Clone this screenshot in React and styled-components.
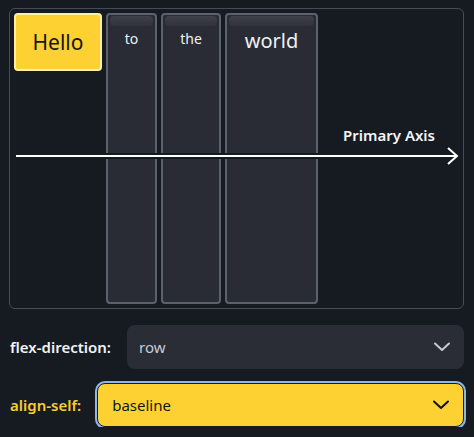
import React from "react";
import styled, { createGlobalStyle } from "styled-components";

const GlobalStyle = createGlobalStyle`
    body {
        margin: 0;
        background: #161b22;
        font-family: "Noto Sans", Lato, sans-serif;
    }
`;

const items = [
    { label: "Hello", width: 88, size: 21, active: true },
    { label: "to", width: 51, size: 14 },
    { label: "the", width: 60, size: 14 },
    { label: "world", width: 93, size: 20 },
];

function Chevron({ color }) {
    return (
        <svg width="18" height="10" viewBox="0 0 18 10">
            <polyline points="2,1.5 9,8 16,1.5" fill="none" stroke={color} strokeWidth="2" strokeLinecap="round" strokeLinejoin="round" />
        </svg>
    );
}

function Select({ value, highlight }) {
    return (
        <SelectBox highlight={highlight}>
            <span>{value}</span>
            <Chevron color={highlight ? "#111" : "#c6cad1"} />
        </SelectBox>
    );
}

export default function App() {
    return (
        <Page>
            <GlobalStyle />
            <Frame>
                {items.map((it) => (
                    <Item key={it.label} width={it.width} size={it.size} active={it.active}>
                        {it.label}
                    </Item>
                ))}
                <Axis>
                    <AxisLabel>Primary Axis</AxisLabel>
                    <svg width="446" height="20" viewBox="0 0 446 20">
                        <rect x="0" y="7" width="440" height="6" fill="#161b22" />
                        <line x1="0" y1="10" x2="441" y2="10" stroke="#fff" strokeWidth="2" />
                        <polyline points="432,2 441,10 432,18" fill="none" stroke="#fff" strokeWidth="2" />
                    </svg>
                </Axis>
            </Frame>
            <Controls>
                <Row>
                    <Label>flex-direction:</Label>
                    <Select value="row" />
                </Row>
                <Row>
                    <Label highlight>align-self:</Label>
                    <Select value="baseline" highlight />
                </Row>
            </Controls>
        </Page>
    );
}

const Page = styled.div`
    padding: 8px 10px 0 9px;
`;

const Frame = styled.div`
    position: relative;
    height: 301px;
    box-sizing: border-box;
    border: 1px solid #464c56;
    border-radius: 6px;
    padding: 4px;
    display: flex;
    gap: 4px;
`;

const Item = styled.div`
    position: relative;
    box-sizing: border-box;
    width: ${(p) => p.width}px;
    flex-shrink: 0;
    font-size: ${(p) => p.size}px;
    text-align: center;
    border-radius: 4px;
    ${(p) =>
        p.active
            ? `
        align-self: flex-start;
        height: 58px;
        line-height: 54px;
        background: #fdd131;
        border: 2px solid #fff0a6;
        color: #151515;
    `
            : `
        padding-top: ${p.size > 18 ? 12 : 14}px;
        background: #292c34;
        border: 2px solid #5b626d;
        color: #eef0f3;
        &::before {
            content: "";
            position: absolute;
            top: 1px;
            left: 2px;
            right: 2px;
            height: 10px;
            border-radius: 4px;
            background: linear-gradient(#3e414a, #30333b);
        }
    `}
`;

const Axis = styled.div`
    position: absolute;
    left: 6px;
    top: 116px;
    display: flex;
    flex-direction: column;
    align-items: flex-end;
    pointer-events: none;
`;

const AxisLabel = styled.div`
    margin-right: 27px;
    margin-bottom: 1px;
    font-size: 15px;
    font-weight: 600;
    color: #f4f5f7;
`;

const Controls = styled.div`
    display: flex;
    flex-direction: column;
    gap: 14px;
    padding: 16px 0 0 1px;
`;

const Row = styled.div`
    display: flex;
    align-items: center;
    gap: 16px;
`;

const Label = styled.div`
    font-size: 15px;
    font-weight: 600;
    color: ${(p) => (p.highlight ? "#f6cd34" : "#f2f3f5")};
    white-space: nowrap;
`;

const SelectBox = styled.div`
    flex: 1;
    height: 44px;
    box-sizing: border-box;
    display: flex;
    align-items: center;
    justify-content: space-between;
    padding: 0 13px 0 12px;
    border-radius: 8px;
    font-size: 15px;
    background: ${(p) => (p.highlight ? "#fdd131" : "#2a2d35")};
    color: ${(p) => (p.highlight ? "#151515" : "#c9ccd3")};
    border: ${(p) => (p.highlight ? "1px solid #1c1c1c" : "none")};
    box-shadow: ${(p) => (p.highlight ? "0 0 0 2px #8db6ee" : "none")};
    ${(p) => p.highlight && "padding-left: 14px;"}
`;
